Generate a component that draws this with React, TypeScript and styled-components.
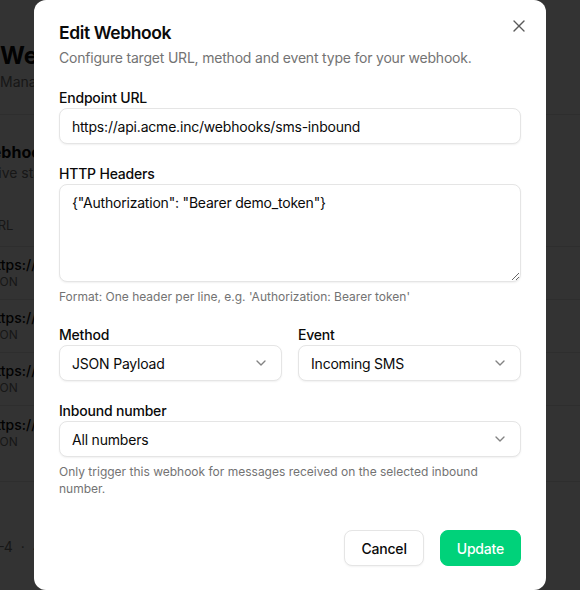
import styled, { createGlobalStyle } from 'styled-components';
import { ChevronDown, X } from 'lucide-react';

const GlobalStyle = createGlobalStyle`
    * {
        box-sizing: border-box;
    }
    html, body {
        margin: 0;
        padding: 0;
        background: #ffffff;
        font-family: Inter, 'Noto Sans', 'Liberation Sans', sans-serif;
        color: #0a0a0a;
        overflow: hidden;
    }
`;

const Page = styled.div`
    width: 580px;
    height: 590px;
    overflow: hidden;
    background: #ffffff;
`;

const PageHeader = styled.div`
    padding: 40px 0 0 0;
    height: 115px;
    border-bottom: 1px solid #e5e5e5;
`;

const PageTitle = styled.h1`
    margin: 0;
    font-size: 24px;
    line-height: 32px;
    font-weight: 700;
`;

const PageSub = styled.p`
    margin: 0;
    font-size: 14px;
    line-height: 20px;
    color: #737373;
`;

const Card = styled.div`
    margin: 26px 0 0 -48px;
    border-bottom: 1px solid #e5e5e5;
    padding-bottom: 22px;
`;

const CardHead = styled.div`
    padding: 0 24px;
`;

const CardTitle = styled.div`
    font-size: 16px;
    line-height: 22px;
    font-weight: 700;
`;

const CardSub = styled.div`
    font-size: 14px;
    line-height: 20px;
    color: #737373;
`;

const TableHead = styled.div`
    margin-top: 20px;
    padding: 0 36px;
    height: 44px;
    display: flex;
    align-items: center;
    font-size: 13px;
    color: #737373;
    border-bottom: 1px solid #e5e5e5;
`;

const Row = styled.div<{ $last?: boolean }>`
    height: 53px;
    padding: 0 36px;
    display: flex;
    flex-direction: column;
    justify-content: center;
    border-bottom: ${(p) => (p.$last ? 'none' : '1px solid #e5e5e5')};
`;

const RowUrl = styled.div`
    font-size: 14px;
    line-height: 18px;
    font-weight: 500;
`;

const RowMeta = styled.div`
    margin-left: -3px;
    font-size: 12px;
    line-height: 16px;
    color: #737373;
`;

const Pager = styled.div`
    margin: 56px 0 0 -9px;
    display: flex;
    gap: 8px;
    font-size: 14px;
    color: #737373;
`;

const Overlay = styled.div`
    position: fixed;
    inset: 0;
    background: rgba(0, 0, 0, 0.8);
    display: flex;
    justify-content: center;
    align-items: flex-start;
`;

const Modal = styled.div`
    position: relative;
    width: 512px;
    height: 590px;
    background: #ffffff;
    border-radius: 12px;
    padding: 19px 25px 24px 25px;
    display: flex;
    flex-direction: column;
    letter-spacing: -0.2px;
`;

const CloseBtn = styled.button`
    position: absolute;
    top: 16px;
    right: 17px;
    width: 20px;
    height: 20px;
    padding: 0;
    border: none;
    background: transparent;
    color: #5a5a5a;
    display: flex;
    align-items: center;
    justify-content: center;
    cursor: pointer;
`;

const Title = styled.h2`
    margin: 0;
    font-size: 17.5px;
    line-height: 28px;
    font-weight: 600;
    letter-spacing: -0.4px;
`;

const Description = styled.p`
    margin: 1px 0 0 0;
    font-size: 14px;
    line-height: 20px;
    color: #737373;
`;

const Form = styled.div`
    margin-top: 20px;
    display: flex;
    flex-direction: column;
    gap: 20px;
`;

const Field = styled.div`
    display: flex;
    flex-direction: column;
    min-width: 0;
`;

const Pair = styled.div`
    display: grid;
    grid-template-columns: 1fr 1fr;
    gap: 16px;
`;

const Label = styled.label`
    font-size: 14px;
    line-height: 20px;
    font-weight: 500;
`;

const Input = styled.input`
    height: 36px;
    width: 100%;
    border: 1px solid #e5e5e5;
    border-radius: 8px;
    padding: 0 12px;
    font: inherit;
    font-size: 14px;
    letter-spacing: -0.2px;
    color: #0a0a0a;
    background: #ffffff;
    box-shadow: 0 1px 2px rgba(0, 0, 0, 0.06);
    outline: none;
`;

const TextArea = styled.textarea`
    height: 98px;
    width: 100%;
    border: 1px solid #e5e5e5;
    border-radius: 8px;
    padding: 8px 12px;
    font: inherit;
    font-size: 14px;
    line-height: 20px;
    letter-spacing: -0.2px;
    color: #0a0a0a;
    background: #ffffff;
    box-shadow: 0 1px 2px rgba(0, 0, 0, 0.06);
    outline: none;
    resize: vertical;
    display: block;
`;

const SelectBox = styled.button`
    height: 36px;
    width: 100%;
    border: 1px solid #e5e5e5;
    border-radius: 8px;
    padding: 0 12px;
    background: #ffffff;
    box-shadow: 0 1px 2px rgba(0, 0, 0, 0.06);
    display: flex;
    align-items: center;
    justify-content: space-between;
    font: inherit;
    font-size: 14px;
    letter-spacing: -0.2px;
    color: #0a0a0a;
    cursor: pointer;
    svg {
        opacity: 0.5;
        flex-shrink: 0;
    }
`;

const Help = styled.p`
    margin: 6px 0 0 0;
    padding-right: 40px;
    font-size: 12px;
    line-height: 17px;
    letter-spacing: 0;
    color: #737373;
`;

const Footer = styled.div`
    margin-top: auto;
    display: flex;
    justify-content: flex-end;
    gap: 16px;
`;

const Button = styled.button<{ $primary?: boolean }>`
    height: 36px;
    padding: 0 16px;
    border-radius: 8px;
    font: inherit;
    font-size: 14px;
    font-weight: 500;
    letter-spacing: -0.2px;
    cursor: pointer;
    border: 1px solid ${(p) => (p.$primary ? '#00d27a' : '#e5e5e5')};
    background: ${(p) => (p.$primary ? '#00d27a' : '#ffffff')};
    color: ${(p) => (p.$primary ? '#ffffff' : '#0a0a0a')};
    box-shadow: ${(p) => (p.$primary ? 'none' : '0 1px 2px rgba(0, 0, 0, 0.05)')};
`;

const rows = [
    'https://api.acme.inc/webhooks/sms-inbound',
    'https://hooks.example.com/sms',
    'https://api.acme.inc/webhooks/status',
    'https://crm.acme.inc/hooks/messages',
];

function Select({ value }: { value: string }) {
    return (
        <SelectBox type="button">
            <span>{value}</span>
            <ChevronDown size={16} />
        </SelectBox>
    );
}

export default function App() {
    return (
        <>
            <GlobalStyle />
            <Page>
                <PageHeader>
                    <PageTitle>Webhooks</PageTitle>
                    <PageSub>Manage endpoints that receive events</PageSub>
                </PageHeader>
                <Card>
                    <CardHead>
                        <CardTitle>Webhooks</CardTitle>
                        <CardSub>Active status and delivery settings</CardSub>
                    </CardHead>
                    <TableHead>URL</TableHead>
                    {rows.map((url, i) => (
                        <Row key={url} $last={i === rows.length - 1}>
                            <RowUrl>{url}</RowUrl>
                            <RowMeta>JSON</RowMeta>
                        </Row>
                    ))}
                </Card>
                <Pager>
                    <span>1–4</span>
                    <span>·</span>
                    <span>4 total</span>
                </Pager>
            </Page>

            <Overlay>
                <Modal>
                    <CloseBtn aria-label="Close">
                        <X size={20} strokeWidth={1.6} />
                    </CloseBtn>
                    <Title>Edit Webhook</Title>
                    <Description>Configure target URL, method and event type for your webhook.</Description>

                    <Form>
                        <Field>
                            <Label>Endpoint URL</Label>
                            <Input defaultValue="https://api.acme.inc/webhooks/sms-inbound" />
                        </Field>
                        <Field>
                            <Label>HTTP Headers</Label>
                            <TextArea defaultValue={'{"Authorization": "Bearer demo_token"}'} />
                            <Help>Format: One header per line, e.g. 'Authorization: Bearer token'</Help>
                        </Field>
                        <Pair>
                            <Field>
                                <Label>Method</Label>
                                <Select value="JSON Payload" />
                            </Field>
                            <Field>
                                <Label>Event</Label>
                                <Select value="Incoming SMS" />
                            </Field>
                        </Pair>
                        <Field>
                            <Label>Inbound number</Label>
                            <Select value="All numbers" />
                            <Help>Only trigger this webhook for messages received on the selected inbound number.</Help>
                        </Field>
                    </Form>

                    <Footer>
                        <Button>Cancel</Button>
                        <Button $primary>Update</Button>
                    </Footer>
                </Modal>
            </Overlay>
        </>
    );
}
